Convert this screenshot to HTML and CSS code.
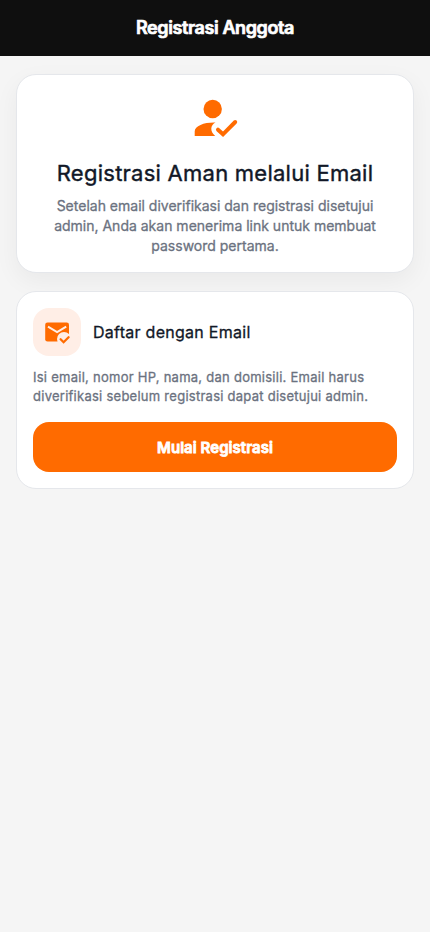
FILE: index.html
```html
<!DOCTYPE html>
<html lang="id">
<head>
<meta charset="utf-8">
<meta name="viewport" content="width=device-width, initial-scale=1">
<title>Registrasi Anggota</title>
<link rel="stylesheet" href="styles.css">
</head>
<body>
<header class="app-bar"><h1 class="app-title">Registrasi Anggota</h1></header>
<main class="content">
  <section class="card hero">
    <svg class="hero-icon" viewBox="0 0 56 56" aria-hidden="true">
      <circle cx="25.700" cy="18" r="9.200" fill="#ff6b00"/>
      <path d="M7.700 45v-4.500C7.700 34.500 18 31.100 28.500 31.500C23.500 34 22.500 40 28.200 45Z" fill="#ff6b00"/>
      <path d="M31 38.700l5 4.600L48.200 31" fill="none" stroke="#ff6b00" stroke-width="4" stroke-linecap="round"/>
    </svg>
    <h2 class="hero-title">Registrasi Aman melalui Email</h2>
    <p class="hero-text">Setelah email diverifikasi dan registrasi disetujui<br>admin, Anda akan menerima link untuk membuat<br>password pertama.</p>
  </section>
  <section class="card signup">
    <div class="signup-head">
      <div class="badge">
        <svg class="badge-icon" viewBox="0 0 28 28" aria-hidden="true">
          <rect x="2.200" y="4.500" width="23.800" height="19" rx="2.300" fill="#ff6b00"/>
          <path d="M5 8.700l9.100 5.500 9.100-5.500" fill="none" stroke="#ffeee6" stroke-width="2"/>
          <circle cx="21" cy="21" r="7" fill="#ffeee6"/>
          <path d="M17.600 21.200l3 3 5-5" fill="none" stroke="#ff6b00" stroke-width="2.300" stroke-linecap="round"/>
        </svg>
      </div>
      <h3 class="signup-title">Daftar dengan Email</h3>
    </div>
    <p class="signup-text">Isi email, nomor HP, nama, dan domisili. Email harus<br>diverifikasi sebelum registrasi dapat disetujui admin.</p>
    <button class="primary" type="button">Mulai Registrasi</button>
  </section>
</main>
</body>
</html>
```
FILE: styles.css
```css
* { box-sizing: border-box; }
body { margin: 0; min-height: 100vh; background: #f5f5f5; font-family: Inter, sans-serif; color: #111827; }
h1, h2, h3, p { margin: 0; white-space: nowrap; }
.app-bar { height: 56px; background: #0f0f0f; display: flex; align-items: center; justify-content: center; }
.app-title { color: #fff; font-size: 18px; line-height: 22px; margin-top: -1px; font-weight: 600; letter-spacing: -0.4px; -webkit-text-stroke: 0.7px #fff; }
.content { padding: 18px 16px; display: flex; flex-direction: column; gap: 18px; }
.card { background: #fff; border: 1px solid #e5e7eb; border-radius: 20px; }
.hero { height: 199px; padding-top: 16px; display: flex; flex-direction: column; align-items: center; box-shadow: 0 8px 24px rgba(0, 0, 0, 0.05); }
.hero-icon { width: 56px; height: 56px; flex: none; }
.hero-title { margin-top: 12px; font-size: 22px; line-height: 28px; font-weight: 400; letter-spacing: 0.25px; -webkit-text-stroke: 0.4px; }
.hero-text { margin-top: 9px; font-size: 14px; line-height: 20px; text-align: center; color: #6b7280; font-weight: 400; -webkit-text-stroke: 0.3px; }
.signup { height: 198px; padding: 16px; }
.signup-head { display: flex; align-items: center; gap: 12px; }
.badge { width: 48px; height: 48px; border-radius: 16px; background: #ffeee6; display: flex; align-items: center; justify-content: center; }
.badge-icon { width: 28px; height: 28px; }
.signup-title { font-size: 16px; font-weight: 400; letter-spacing: 0.27px; -webkit-text-stroke: 0.3px; }
.signup-text { margin-top: 12px; font-size: 13px; line-height: 19px; font-weight: 400; letter-spacing: 0.26px; -webkit-text-stroke: 0.3px; color: #6b7280; }
.primary { display: block; width: 100%; height: 50px; margin-top: 16px; border: 0; border-radius: 16px; background: #ff6b00; color: #fff; font: 600 15px Inter, sans-serif; letter-spacing: 0.05px; -webkit-text-stroke: 0.8px #fff; }
```
